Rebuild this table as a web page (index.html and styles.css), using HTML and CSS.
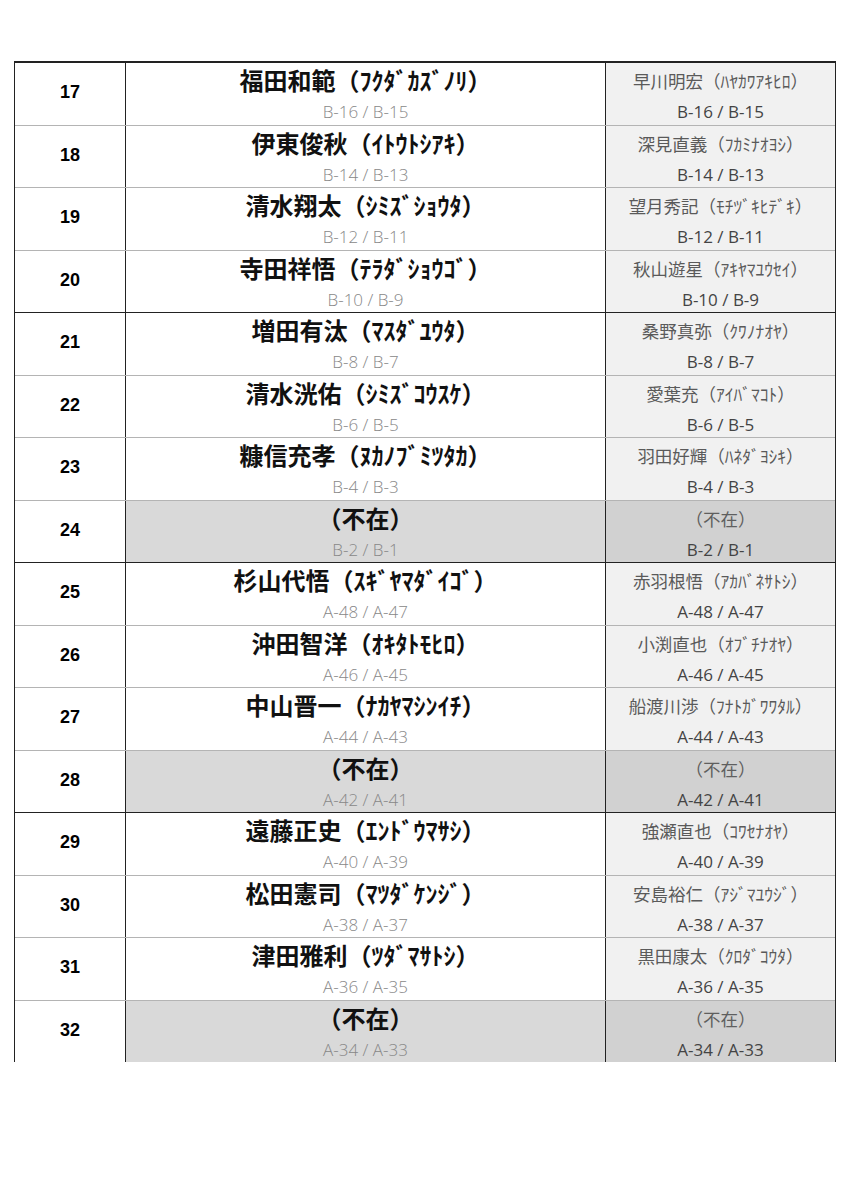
FILE: index.html
```html
<!DOCTYPE html>
<html lang="ja">
<head>
<meta charset="utf-8">
<link rel="stylesheet" href="styles.css">
</head>
<body>
<div class="sheet">
  <div class="row group-start">
    <div class="num">17</div>
    <div class="main"><div class="name">福田和範（ﾌｸﾀﾞｶｽﾞﾉﾘ）</div><div class="code">B-16 / B-15</div></div>
    <div class="side"><div class="sname">早川明宏（ﾊﾔｶﾜｱｷﾋﾛ）</div><div class="scode">B-16 / B-15</div></div>
  </div>
  <div class="row">
    <div class="num">18</div>
    <div class="main"><div class="name">伊東俊秋（ｲﾄｳﾄｼｱｷ）</div><div class="code">B-14 / B-13</div></div>
    <div class="side"><div class="sname">深見直義（ﾌｶﾐﾅｵﾖｼ）</div><div class="scode">B-14 / B-13</div></div>
  </div>
  <div class="row">
    <div class="num">19</div>
    <div class="main"><div class="name">清水翔太（ｼﾐｽﾞｼｮｳﾀ）</div><div class="code">B-12 / B-11</div></div>
    <div class="side"><div class="sname">望月秀記（ﾓﾁﾂﾞｷﾋﾃﾞｷ）</div><div class="scode">B-12 / B-11</div></div>
  </div>
  <div class="row">
    <div class="num">20</div>
    <div class="main"><div class="name">寺田祥悟（ﾃﾗﾀﾞｼｮｳｺﾞ）</div><div class="code">B-10 / B-9</div></div>
    <div class="side"><div class="sname">秋山遊星（ｱｷﾔﾏﾕｳｾｲ）</div><div class="scode">B-10 / B-9</div></div>
  </div>
  <div class="row group-start">
    <div class="num">21</div>
    <div class="main"><div class="name">増田有汰（ﾏｽﾀﾞﾕｳﾀ）</div><div class="code">B-8 / B-7</div></div>
    <div class="side"><div class="sname">桑野真弥（ｸﾜﾉﾅｵﾔ）</div><div class="scode">B-8 / B-7</div></div>
  </div>
  <div class="row">
    <div class="num">22</div>
    <div class="main"><div class="name">清水洸佑（ｼﾐｽﾞｺｳｽｹ）</div><div class="code">B-6 / B-5</div></div>
    <div class="side"><div class="sname">愛葉充（ｱｲﾊﾞﾏｺﾄ）</div><div class="scode">B-6 / B-5</div></div>
  </div>
  <div class="row">
    <div class="num">23</div>
    <div class="main"><div class="name">糠信充孝（ﾇｶﾉﾌﾞﾐﾂﾀｶ）</div><div class="code">B-4 / B-3</div></div>
    <div class="side"><div class="sname">羽田好輝（ﾊﾈﾀﾞﾖｼｷ）</div><div class="scode">B-4 / B-3</div></div>
  </div>
  <div class="row absent">
    <div class="num">24</div>
    <div class="main"><div class="name">（不在）</div><div class="code">B-2 / B-1</div></div>
    <div class="side"><div class="sname">（不在）</div><div class="scode">B-2 / B-1</div></div>
  </div>
  <div class="row group-start">
    <div class="num">25</div>
    <div class="main"><div class="name">杉山代悟（ｽｷﾞﾔﾏﾀﾞｲｺﾞ）</div><div class="code">A-48 / A-47</div></div>
    <div class="side"><div class="sname">赤羽根悟（ｱｶﾊﾞﾈｻﾄｼ）</div><div class="scode">A-48 / A-47</div></div>
  </div>
  <div class="row">
    <div class="num">26</div>
    <div class="main"><div class="name">沖田智洋（ｵｷﾀﾄﾓﾋﾛ）</div><div class="code">A-46 / A-45</div></div>
    <div class="side"><div class="sname">小渕直也（ｵﾌﾞﾁﾅｵﾔ）</div><div class="scode">A-46 / A-45</div></div>
  </div>
  <div class="row">
    <div class="num">27</div>
    <div class="main"><div class="name">中山晋一（ﾅｶﾔﾏｼﾝｲﾁ）</div><div class="code">A-44 / A-43</div></div>
    <div class="side"><div class="sname">船渡川渉（ﾌﾅﾄｶﾞﾜﾜﾀﾙ）</div><div class="scode">A-44 / A-43</div></div>
  </div>
  <div class="row absent">
    <div class="num">28</div>
    <div class="main"><div class="name">（不在）</div><div class="code">A-42 / A-41</div></div>
    <div class="side"><div class="sname">（不在）</div><div class="scode">A-42 / A-41</div></div>
  </div>
  <div class="row group-start">
    <div class="num">29</div>
    <div class="main"><div class="name">遠藤正史（ｴﾝﾄﾞｳﾏｻｼ）</div><div class="code">A-40 / A-39</div></div>
    <div class="side"><div class="sname">強瀬直也（ｺﾜｾﾅｵﾔ）</div><div class="scode">A-40 / A-39</div></div>
  </div>
  <div class="row">
    <div class="num">30</div>
    <div class="main"><div class="name">松田憲司（ﾏﾂﾀﾞｹﾝｼﾞ）</div><div class="code">A-38 / A-37</div></div>
    <div class="side"><div class="sname">安島裕仁（ｱｼﾞﾏﾕｳｼﾞ）</div><div class="scode">A-38 / A-37</div></div>
  </div>
  <div class="row">
    <div class="num">31</div>
    <div class="main"><div class="name">津田雅利（ﾂﾀﾞﾏｻﾄｼ）</div><div class="code">A-36 / A-35</div></div>
    <div class="side"><div class="sname">黒田康太（ｸﾛﾀﾞｺｳﾀ）</div><div class="scode">A-36 / A-35</div></div>
  </div>
  <div class="row absent">
    <div class="num">32</div>
    <div class="main"><div class="name">（不在）</div><div class="code">A-34 / A-33</div></div>
    <div class="side"><div class="sname">（不在）</div><div class="scode">A-34 / A-33</div></div>
  </div>
</div>
</body>
</html>
```

FILE: styles.css
```css
html, body {
  margin: 0;
  padding: 0;
  background: #ffffff;
}

body {
  font-family: "Noto Sans CJK JP", "Noto Sans", sans-serif;
  color: #000;
}

.sheet {
  margin: 61px 0 0 14px;
  width: 822px;
  border-top: 2px solid #222;
  border-left: 1.5px solid #222;
  border-right: 1.5px solid #222;
  box-sizing: border-box;
}

.row {
  display: grid;
  grid-template-columns: 111px 480px 1fr;
  grid-template-rows: 100%;
  height: 62.5px;
  box-sizing: border-box;
  border-top: 1px solid #b4b4b4;
}

.row > div {
  min-height: 0;
  overflow: hidden;
}

.row:first-child {
  border-top: none;
  height: 61.5px;
}

.row.group-start:not(:first-child) {
  border-top: 1.5px solid #222;
}

.num {
  display: flex;
  align-items: center;
  justify-content: center;
  font-family: "Liberation Sans", Arial, sans-serif;
  font-weight: bold;
  font-size: 18px;
  padding-bottom: 2px;
  border-right: 1.5px solid #222;
}

.main {
  display: flex;
  flex-direction: column;
  align-items: center;
  border-right: 1.5px solid #222;
}

.name {
  font-weight: bold;
  font-size: 24px;
  line-height: 34px;
  color: #111;
  flex: none;
}

.code {
  font-family: "Open Sans", "Noto Sans", sans-serif;
  font-weight: 300;
  font-size: 17px;
  line-height: 30px;
  color: #888;
  flex: none;
}

.side {
  display: flex;
  flex-direction: column;
  align-items: center;
  background: #f1f1f1;
}

.sname {
  font-size: 17.5px;
  line-height: 36px;
  color: #5a5a5a;
  flex: none;
}

.scode {
  font-family: "Open Sans", "Noto Sans", sans-serif;
  font-weight: 400;
  font-size: 17px;
  line-height: 26px;
  color: #444;
  flex: none;
}

.absent .main {
  background: #d9d9d9;
}

.absent .side {
  background: #d1d1d1;
}

.absent .sname {
  color: #5f5f5f;
}
```
